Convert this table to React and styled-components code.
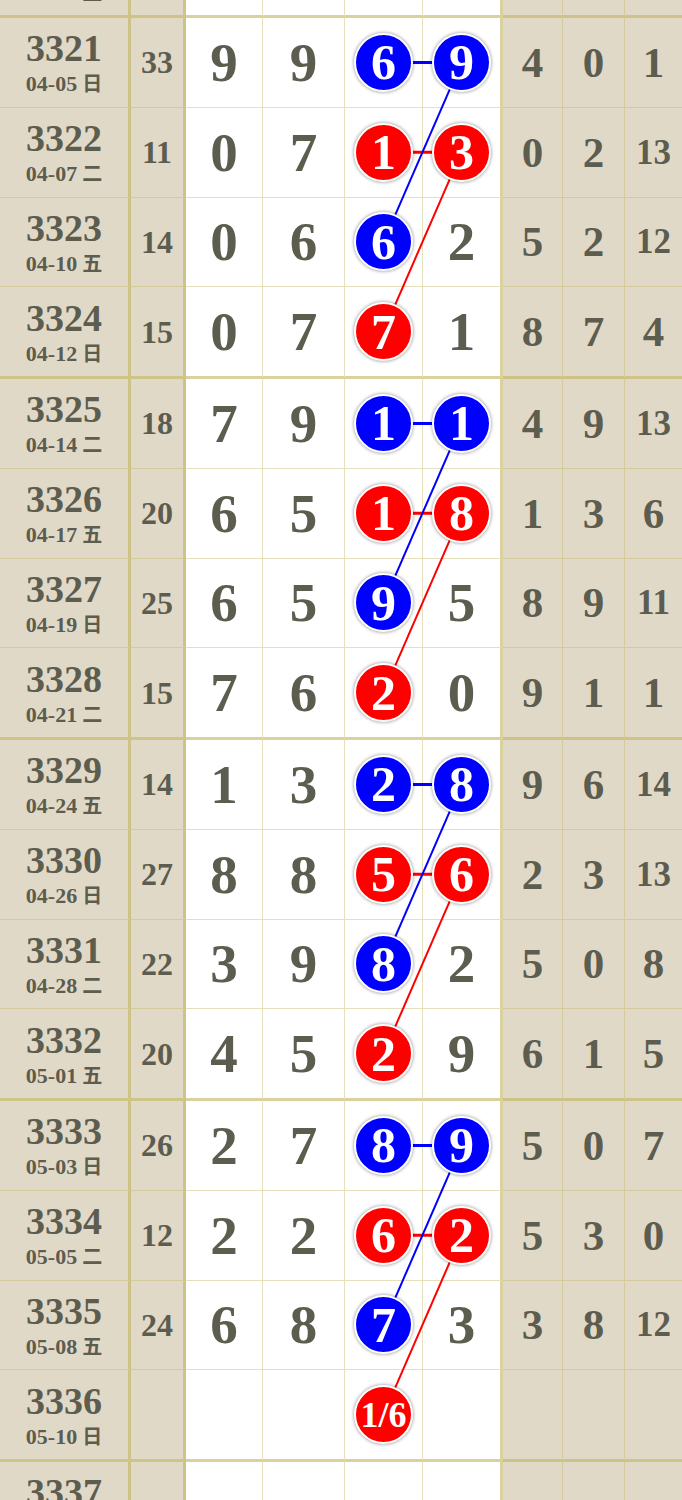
import React from "react";
import styled, { createGlobalStyle } from "styled-components";

const LINE = "rgba(196, 182, 96, 0.42)";
const LINE_THICK = "rgba(196, 182, 96, 0.62)";
const BEIGE = "#e1d9c8";
const INK = "#5c5c4f";
const ROW_H = 88.75;

const Global = createGlobalStyle`
  html, body { margin: 0; padding: 0; background: #ffffff; }
  body { overflow: hidden; }
`;

const Table = styled.div`
  width: 682px;
  margin-top: -73.75px;
  font-family: "Liberation Serif", "Noto Sans CJK SC", serif;
  color: ${INK};
  font-weight: 700;
`;

const Group = styled.div`
  position: relative;
`;

const Row = styled.div`
  display: grid;
  grid-template-columns: 131px 55px 77px 82px 78px 80px 60px 62px 57px;
  height: ${(p) => ROW_H + (p.$thick ? 3 : 1)}px;
`;

const Cell = styled.div`
  box-sizing: border-box;
  display: flex;
  align-items: center;
  justify-content: center;
  background: ${(p) => (p.$white ? "#ffffff" : BEIGE)};
  border-right: ${(p) => p.$edge || 0}px solid ${(p) => (p.$edge > 1 ? LINE_THICK : LINE)};
  border-bottom: ${(p) => (p.$thick ? 3 : 1)}px solid ${(p) => (p.$thick ? LINE_THICK : LINE)};
  overflow: hidden;
`;

const IssueCell = styled(Cell)`
  flex-direction: column;
  gap: 3px;
`;

const IssueNo = styled.div`
  font-size: 38px;
  line-height: 40px;
`;

const IssueDate = styled.div`
  font-size: 22px;
  line-height: 24px;
  white-space: nowrap;
  display: flex;
  align-items: baseline;
  gap: 5px;
`;

const Weekday = styled.span`
  font-family: "Noto Sans CJK SC", sans-serif;
  font-size: 20px;
  font-weight: 700;
`;

const SumText = styled.div`
  font-size: 32px;
  line-height: 1;
`;

const BigDigit = styled.div`
  font-size: 55px;
  line-height: 1;
`;

const SideDigit = styled.div`
  font-size: ${(p) => (p.$small ? 35 : 43)}px;
  line-height: 1;
`;

const BallCell = styled(Cell)`
  overflow: visible;
`;

const Ball = styled.div`
  position: relative;
  z-index: 2;
  box-sizing: border-box;
  width: 59px;
  height: 59px;
  border-radius: 50%;
  border: 2.5px solid #ffffff;
  background: ${(p) => (p.$red ? "#ff0000" : "#0000ff")};
  box-shadow: 0 0 3px 1px rgba(0, 0, 0, 0.28);
  color: #ffffff;
  display: flex;
  align-items: center;
  justify-content: center;
  font-size: ${(p) => (p.$small ? 36 : 50)}px;
  line-height: 1;
`;

const Overlay = styled.svg`
  position: absolute;
  left: 0;
  top: 0;
  z-index: 1;
  pointer-events: none;
`;

const prev = { n: 3320, d: "04-03", w: "五" };

const groups = [
  [
    { n: 3321, d: "04-05", w: "日", s: 33, a: 9, b: 9, c: 6, e: 9, r: [4, 0, 1] },
    { n: 3322, d: "04-07", w: "二", s: 11, a: 0, b: 7, c: 1, e: 3, r: [0, 2, 13] },
    { n: 3323, d: "04-10", w: "五", s: 14, a: 0, b: 6, c: 6, e: 2, r: [5, 2, 12] },
    { n: 3324, d: "04-12", w: "日", s: 15, a: 0, b: 7, c: 7, e: 1, r: [8, 7, 4] },
  ],
  [
    { n: 3325, d: "04-14", w: "二", s: 18, a: 7, b: 9, c: 1, e: 1, r: [4, 9, 13] },
    { n: 3326, d: "04-17", w: "五", s: 20, a: 6, b: 5, c: 1, e: 8, r: [1, 3, 6] },
    { n: 3327, d: "04-19", w: "日", s: 25, a: 6, b: 5, c: 9, e: 5, r: [8, 9, 11] },
    { n: 3328, d: "04-21", w: "二", s: 15, a: 7, b: 6, c: 2, e: 0, r: [9, 1, 1] },
  ],
  [
    { n: 3329, d: "04-24", w: "五", s: 14, a: 1, b: 3, c: 2, e: 8, r: [9, 6, 14] },
    { n: 3330, d: "04-26", w: "日", s: 27, a: 8, b: 8, c: 5, e: 6, r: [2, 3, 13] },
    { n: 3331, d: "04-28", w: "二", s: 22, a: 3, b: 9, c: 8, e: 2, r: [5, 0, 8] },
    { n: 3332, d: "05-01", w: "五", s: 20, a: 4, b: 5, c: 2, e: 9, r: [6, 1, 5] },
  ],
  [
    { n: 3333, d: "05-03", w: "日", s: 26, a: 2, b: 7, c: 8, e: 9, r: [5, 0, 7] },
    { n: 3334, d: "05-05", w: "二", s: 12, a: 2, b: 2, c: 6, e: 2, r: [5, 3, 0] },
    { n: 3335, d: "05-08", w: "五", s: 24, a: 6, b: 8, c: 7, e: 3, r: [3, 8, 12] },
    { n: 3336, d: "05-10", w: "日", c: "1/6" },
  ],
];

const next = { n: 3337, d: "05-12", w: "二" };

function IssueBlock({ row, thick }) {
  return (
    <IssueCell $edge={3} $thick={thick}>
      <IssueNo>{row.n}</IssueNo>
      <IssueDate>
        <span>{row.d}</span>
        <Weekday>{row.w}</Weekday>
      </IssueDate>
    </IssueCell>
  );
}

function EmptyRow({ row, thick }) {
  return (
    <Row $thick={thick}>
      <IssueBlock row={row} thick={thick} />
      <Cell $edge={3} $thick={thick} />
      <Cell $white $edge={1} $thick={thick} />
      <Cell $white $edge={1} $thick={thick} />
      <Cell $white $edge={1} $thick={thick} />
      <Cell $white $edge={3} $thick={thick} />
      <Cell $edge={1} $thick={thick} />
      <Cell $edge={1} $thick={thick} />
      <Cell $thick={thick} />
    </Row>
  );
}

function DataRow({ row, index }) {
  const thick = index === 3;
  const red = index % 2 === 1;
  const pairBall = index < 2;
  const has = row.s !== undefined;
  return (
    <Row $thick={thick}>
      <IssueBlock row={row} thick={thick} />
      <Cell $edge={3} $thick={thick}>{has && <SumText>{row.s}</SumText>}</Cell>
      <Cell $white $edge={1} $thick={thick}>{has && <BigDigit>{row.a}</BigDigit>}</Cell>
      <Cell $white $edge={1} $thick={thick}>{has && <BigDigit>{row.b}</BigDigit>}</Cell>
      <BallCell $white $edge={1} $thick={thick}>
        <Ball $red={red} $small={String(row.c).length > 1}>{row.c}</Ball>
      </BallCell>
      <BallCell $white $edge={3} $thick={thick}>
        {has && (pairBall ? <Ball $red={red}>{row.e}</Ball> : <BigDigit>{row.e}</BigDigit>)}
      </BallCell>
      {[0, 1, 2].map((k) => (
        <Cell key={k} $edge={k < 2 ? 1 : 0} $thick={thick}>
          {has && <SideDigit $small={row.r[k] > 9}>{row.r[k]}</SideDigit>}
        </Cell>
      ))}
    </Row>
  );
}

const X3 = 383.5;
const X4 = 461.5;
const cy = (i) => i * (ROW_H + 1) + ROW_H / 2;
const GROUP_H = 4 * ROW_H + 6;

function Links() {
  return (
    <Overlay width="682" height={GROUP_H} viewBox={`0 0 682 ${GROUP_H}`}>
      <line x1={X3} y1={cy(0)} x2={X4} y2={cy(0)} stroke="#0000ff" strokeWidth="3" />
      <line x1={X3} y1={cy(1)} x2={X4} y2={cy(1)} stroke="#ff0000" strokeWidth="3" />
      <line x1={X4} y1={cy(0)} x2={X3} y2={cy(2)} stroke="#0000ff" strokeWidth="2" />
      <line x1={X4} y1={cy(1)} x2={X3} y2={cy(3)} stroke="#ff0000" strokeWidth="2" />
    </Overlay>
  );
}

export default function App() {
  return (
    <>
      <Global />
      <Table>
        <EmptyRow row={prev} thick />
        {groups.map((g, gi) => (
          <Group key={gi}>
            <Links />
            {g.map((row, i) => (
              <DataRow key={row.n} row={row} index={i} />
            ))}
          </Group>
        ))}
        <EmptyRow row={next} />
      </Table>
    </>
  );
}
